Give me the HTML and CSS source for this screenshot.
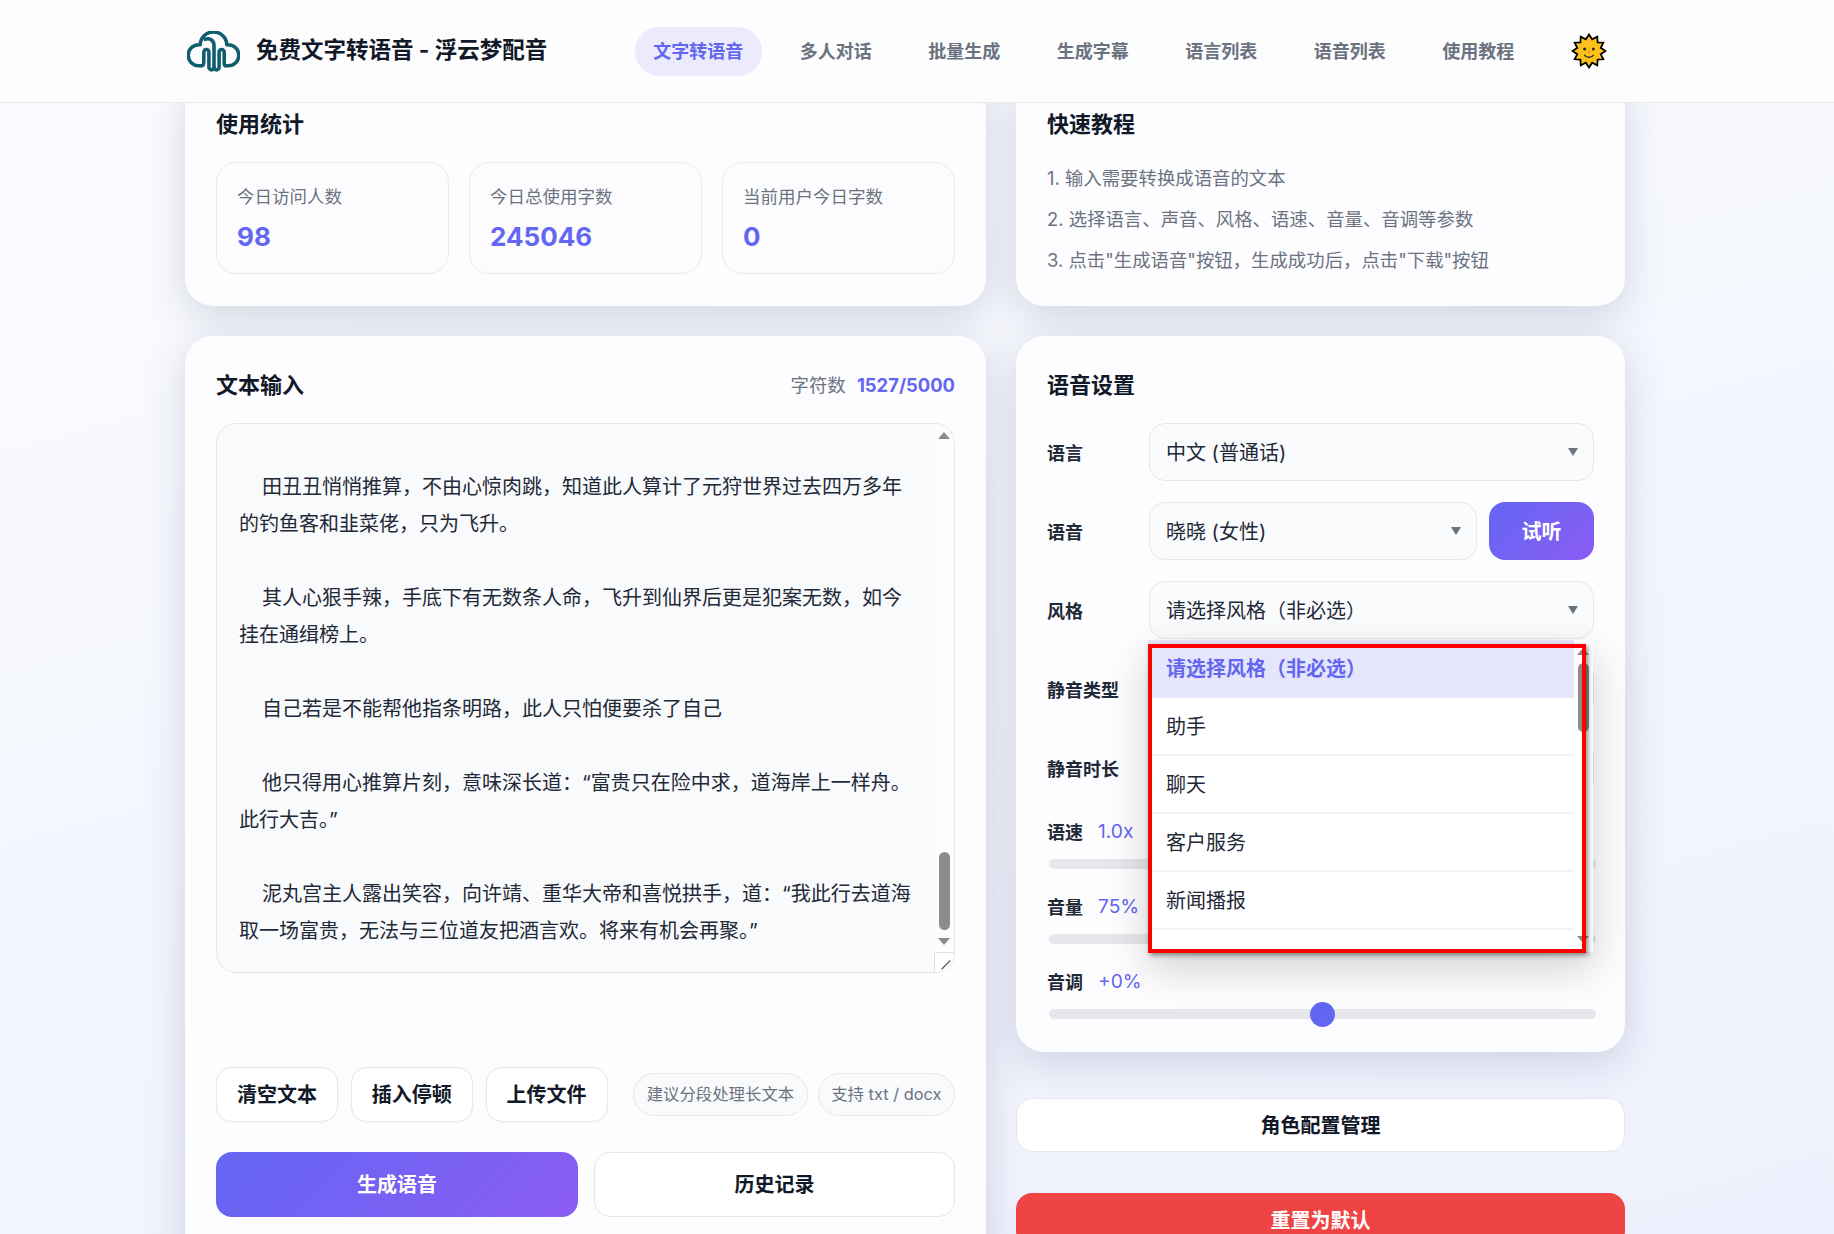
FILE: index.html
```html
<!DOCTYPE html>
<html lang="zh-CN">
<head>
  <meta charset="UTF-8">
  <meta name="viewport" content="width=device-width, initial-scale=1.0">
  <link rel="stylesheet" href="styles.css">
  <title>免费文字转语音 - 浮云梦配音</title>
</head>
<body>
  <header class="topbar">
    <div class="brand">
      <svg class="logo" viewBox="0 0 52 40" fill="none" stroke="#0f5d6e" stroke-width="3.500" stroke-linecap="round" stroke-linejoin="round">
        <path d="M14 34H11.500A10.300 10.300 0 0 1 11.500 13.400H13A13 12.600 0 0 1 39 13.400H40.500A10.300 10.300 0 0 1 40.500 34H38"/>
        <path d="M14 34C16 34 16.500 32.500 16.500 30V20.500A2.500 2.500 0 0 1 21.500 20.500V35.500A2.500 2.500 0 0 0 26.500 35.500V14C26.500 9 22 6.500 18 8"/>
        <path d="M26.500 35.500A2.500 2.500 0 0 0 31.500 35.500V20.500A2.500 2.500 0 0 1 36.500 20.500V31C36.500 33 37 34 38 34"/>
      </svg>
      <span class="brand-name">免费文字转语音 - 浮云梦配音</span>
    </div>
    <nav class="nav">
      <a class="nav-link active">文字转语音</a>
      <a class="nav-link">多人对话</a>
      <a class="nav-link">批量生成</a>
      <a class="nav-link">生成字幕</a>
      <a class="nav-link">语言列表</a>
      <a class="nav-link">语音列表</a>
      <a class="nav-link">使用教程</a>
    </nav>
    <svg class="theme-icon" viewBox="-1.500 -1.500 37 37">
      <polygon fill="#fcc21b" stroke="#000" stroke-width="1.800" stroke-linejoin="miter" points="17,0 20.240,4.930 25.500,2.280 25.840,8.160 31.720,8.500 29.070,13.760 34,17 29.070,20.240 31.720,25.500 25.840,25.840 25.500,31.720 20.240,29.070 17,34 13.760,29.070 8.500,31.720 8.160,25.840 2.280,25.500 4.930,20.240 0,17 4.930,13.760 2.280,8.500 8.160,8.160 8.500,2.280 13.760,4.930"/>
      <circle cx="12.500" cy="15" r="1.600" fill="#2f2f2f"/>
      <circle cx="21.500" cy="15" r="1.600" fill="#2f2f2f"/>
      <circle cx="17" cy="18" r="1.200" fill="#f79329"/>
      <path d="M12.500 21.500C14.500 24 19.500 24 21.500 21.500" fill="none" stroke="#2f2f2f" stroke-width="1.500" stroke-linecap="round"/>
    </svg>
  </header>

  <main class="page">
    <section class="card">
      <h2 class="card-title">使用统计</h2>
      <div class="stats">
        <div class="stat">
          <div class="stat-label">今日访问人数</div>
          <div class="stat-value">98</div>
        </div>
        <div class="stat">
          <div class="stat-label">今日总使用字数</div>
          <div class="stat-value">245046</div>
        </div>
        <div class="stat">
          <div class="stat-label">当前用户今日字数</div>
          <div class="stat-value">0</div>
        </div>
      </div>
    </section>

    <section class="card">
      <h2 class="card-title">快速教程</h2>
      <ol class="steps">
        <li>1. 输入需要转换成语音的文本</li>
        <li>2. 选择语言、声音、风格、语速、音量、音调等参数</li>
        <li>3. 点击"生成语音"按钮，生成成功后，点击"下载"按钮</li>
      </ol>
    </section>

    <section class="card editor">
      <div class="card-head">
        <h2 class="card-title">文本输入</h2>
        <div class="counter">字符数 <strong>1527/5000</strong></div>
      </div>

      <div class="textbox">
        <div class="textbox-text">
          <p class="para">田丑丑悄悄推算，不由心惊肉跳，知道此人算计了元狩世界过去四万多年的钓鱼客和韭菜佬，只为飞升。</p>
          <p class="para">其人心狠手辣，手底下有无数条人命，飞升到仙界后更是犯案无数，如今挂在通缉榜上。</p>
          <p class="para">自己若是不能帮他指条明路，此人只怕便要杀了自己</p>
          <p class="para">他只得用心推算片刻，意味深长道：“富贵只在险中求，道海岸上一样舟。此行大吉。”</p>
          <p class="para">泥丸宫主人露出笑容，向许靖、重华大帝和喜悦拱手，道：“我此行去道海取一场富贵，无法与三位道友把酒言欢。将来有机会再聚。”</p>
        </div>
        <div class="textbox-bar">
          <span class="arrow-up"></span>
          <span class="textbox-thumb"></span>
          <span class="arrow-down"></span>
        </div>
        <svg class="grip" viewBox="0 0 20 20" fill="none" stroke="#666" stroke-width="1.500">
          <path d="M7 17L16 8M13 17L16 14"/>
        </svg>
      </div>

      <div class="tools">
        <button class="btn">清空文本</button>
        <button class="btn">插入停顿</button>
        <button class="btn">上传文件</button>
        <div class="chips">
          <span class="chip">建议分段处理长文本</span>
          <span class="chip">支持 txt / docx</span>
        </div>
      </div>

      <div class="actions">
        <button class="btn-main">生成语音</button>
        <button class="btn-plain">历史记录</button>
      </div>
    </section>

    <div class="side">
      <section class="card settings">
        <h2 class="card-title">语音设置</h2>

        <div class="form-row">
          <label class="form-label">语言</label>
          <div class="select">中文 (普通话)</div>
        </div>
        <div class="form-row">
          <label class="form-label">语音</label>
          <div class="select">晓晓 (女性)</div>
          <button class="btn-try">试听</button>
        </div>
        <div class="form-row">
          <label class="form-label">风格</label>
          <div class="select">请选择风格（非必选）</div>
        </div>
        <div class="form-row">
          <label class="form-label">静音类型</label>
          <div class="select"></div>
        </div>
        <div class="form-row">
          <label class="form-label">静音时长</label>
          <div class="select"></div>
        </div>

        <div class="slider">
          <div class="slider-head"><label class="form-label">语速</label><span class="slider-value">1.0x</span></div>
          <div class="track"><span class="thumb" style="left: 50%"></span></div>
        </div>
        <div class="slider">
          <div class="slider-head"><label class="form-label">音量</label><span class="slider-value">75%</span></div>
          <div class="track"><span class="thumb" style="left: 75%"></span></div>
        </div>
        <div class="slider">
          <div class="slider-head"><label class="form-label">音调</label><span class="slider-value">+0%</span></div>
          <div class="track"><span class="thumb" style="left: 50%"></span></div>
        </div>

        <!-- open style dropdown -->
        <div class="dropdown">
          <ul class="dropdown-list">
            <li class="dropdown-item selected">请选择风格（非必选）</li>
            <li class="dropdown-item">助手</li>
            <li class="dropdown-item">聊天</li>
            <li class="dropdown-item">客户服务</li>
            <li class="dropdown-item">新闻播报</li>
          </ul>
          <div class="dropdown-bar">
            <span class="arrow-up"></span>
            <span class="dropdown-thumb"></span>
            <span class="arrow-down"></span>
          </div>
          <div class="dropdown-frame"></div>
        </div>
      </section>

      <button class="btn-plain btn-role">角色配置管理</button>
      <button class="btn-reset">重置为默认</button>
    </div>
  </main>
</body>
</html>
```

FILE: styles.css
```css
* {
  box-sizing: border-box;
}

body {
  margin: 0;
  height: 1234px;
  overflow: hidden;
  font-family: Inter, "Noto Sans CJK SC", sans-serif;
  color: #111827;
  background: linear-gradient(165deg, #fbfcff, #eef1fd);
}

button {
  padding: 0 0 2px;
  font-family: inherit;
  cursor: pointer;
}

/* header */
.topbar {
  position: relative;
  z-index: 5;
  height: 103px;
  display: flex;
  align-items: center;
  padding-left: 187px;
  background: #fdfdfe;
  border-bottom: 1px solid #e8eaef;
}

.brand {
  display: flex;
  align-items: center;
  gap: 16px;
  width: 448px;
}

.logo {
  width: 53px;
  height: 41px;
}

.brand-name {
  position: relative;
  top: -3px;
  font-size: 22.500px;
  font-weight: 700;
}

.nav {
  display: flex;
  gap: 20px;
}

.nav-link {
  padding: 0 18.250px;
  height: 49px;
  line-height: 49px;
  border-radius: 25px;
  font-size: 18px;
  font-weight: 600;
  color: #6b7280;
}

.nav-link.active {
  color: #6366f1;
  background: #ebebfd;
}

.theme-icon {
  width: 36px;
  height: 36px;
  margin-left: 38px;
}

/* page grid */
.page {
  margin-top: -28px;
  padding-left: 185px;
  display: grid;
  grid-template-columns: 801px 609px;
  column-gap: 30px;
  row-gap: 30px;
  align-items: start;
}

.card {
  position: relative;
  padding: 31px;
  border-radius: 28px;
  background: #fdfdff;
  box-shadow: 0 10px 40px rgba(30, 40, 80, 0.17);
}

.page > .card:nth-child(-n+2) {
  height: 231px;
}

.card-title {
  margin: 0 0 20px;
  font-size: 22px;
  line-height: 36px;
  font-weight: 700;
}

/* stats */
.stats {
  display: grid;
  grid-template-columns: repeat(3, 1fr);
  gap: 20px;
}

.stat {
  height: 112px;
  padding: 22px 20px;
  border: 1px solid #e8eaef;
  border-radius: 20px;
  background: #fcfcfe;
}

.stat-label {
  font-size: 17.500px;
  line-height: 24px;
  color: #6b7280;
}

.stat-value {
  margin-top: 12px;
  font-size: 26px;
  line-height: 32px;
  font-weight: 700;
  color: #6366f1;
}

/* tutorial */
.steps {
  margin: -4px 0 0;
  padding: 0;
  list-style: none;
  font-size: 18.400px;
  line-height: 41px;
  color: #6b7280;
}

/* text input */
.editor {
  height: 950px;
}

.card-head {
  display: flex;
  justify-content: space-between;
}

.counter {
  font-size: 18.400px;
  line-height: 36px;
  color: #6b7280;
}

.counter strong {
  margin-left: 6px;
  font-weight: 700;
  color: #6366f1;
}

.textbox {
  position: relative;
  height: 550px;
  overflow: hidden;
  border: 1px solid #e5e7eb;
  border-radius: 20px;
  background: #f9fafc;
}

.textbox-text {
  padding: 44.500px 36px 0 22px;
  font-size: 20px;
  line-height: 37px;
  color: #1f2937;
}

.para {
  margin: 0 0 37px;
  text-indent: 23px;
}

.textbox-bar {
  position: absolute;
  top: 0;
  right: 0;
  width: 19px;
  height: 100%;
  background: #fdfdfd;
}

.textbox-thumb {
  position: absolute;
  top: 428px;
  left: 4px;
  width: 11px;
  height: 78px;
  border-radius: 6px;
  background: #8c8c8c;
}

.arrow-up,
.arrow-down {
  position: absolute;
  left: 3px;
  width: 0;
  height: 0;
  border-left: 6.500px solid transparent;
  border-right: 6.500px solid transparent;
}

.arrow-up {
  top: 8px;
  border-bottom: 7px solid #8c8c8c;
}

.arrow-down {
  top: 514px;
  border-top: 7px solid #8c8c8c;
}

.grip {
  position: absolute;
  right: 0;
  bottom: 0;
  width: 20px;
  height: 20px;
  background: #fff;
  border-left: 1px solid #dfe1e6;
  border-top: 1px solid #dfe1e6;
}

/* buttons under the text box */
.tools {
  display: flex;
  align-items: center;
  gap: 12.800px;
  margin-top: 94px;
}

.btn {
  flex: none;
  width: 122px;
  height: 55px;
  border: 1px solid #e5e7eb;
  border-radius: 16px;
  background: #fff;
  font-size: 20px;
  font-weight: 700;
  color: #111827;
  box-shadow: 0 1px 3px rgba(0, 0, 0, 0.04);
}

.chips {
  display: flex;
  gap: 10px;
  margin-left: auto;
}

.chip {
  height: 43px;
  padding: 0 12.500px;
  line-height: 41px;
  border: 1px solid #e5e7eb;
  border-radius: 22px;
  background: #f9fafb;
  font-size: 16.400px;
  color: #6b7280;
  white-space: nowrap;
}

.actions {
  display: grid;
  grid-template-columns: 362px 361px;
  gap: 16px;
  margin-top: 30px;
}

.btn-main {
  height: 65px;
  border: 0;
  border-radius: 16px;
  background: linear-gradient(135deg, #6366f1, #8b5cf6);
  font-size: 20px;
  font-weight: 700;
  color: #fff;
}

.btn-plain {
  height: 65px;
  border: 1px solid #e5e7eb;
  border-radius: 16px;
  background: #fff;
  font-size: 20px;
  font-weight: 700;
  color: #111827;
}

/* settings column */
.side {
  display: flex;
  flex-direction: column;
}

.settings {
  height: 716px;
}

.form-row {
  display: flex;
  align-items: center;
  height: 58px;
  margin-bottom: 21px;
}

.form-label {
  flex: none;
  width: 102px;
  font-size: 18px;
  font-weight: 700;
  color: #1f2937;
}

.select {
  position: relative;
  flex: 1;
  height: 58px;
  padding-left: 16px;
  line-height: 58px;
  border: 1px solid #e5e7eb;
  border-radius: 16px;
  background: #fafbfd;
  font-size: 20px;
  color: #1f2937;
}

.select::after {
  content: "";
  position: absolute;
  top: 24px;
  right: 15px;
  border-left: 5px solid transparent;
  border-right: 5px solid transparent;
  border-top: 8px solid #6b7280;
}

.btn-try {
  width: 105px;
  height: 58px;
  margin-left: 12px;
  border: 0;
  border-radius: 16px;
  background: linear-gradient(135deg, #6366f1, #8b5cf6);
  font-size: 20px;
  font-weight: 700;
  color: #fff;
}

.slider-head {
  display: flex;
  align-items: center;
  height: 28px;
}

.slider-head .form-label {
  width: 51px;
}

.slider-value {
  font-size: 19.200px;
  color: #6366f1;
}

.slider {
  margin-bottom: 23px;
}

.form-row + .slider {
  margin-top: -1px;
}

.track {
  position: relative;
  height: 10px;
  margin: 14px -2px 0 2px;
  border-radius: 5px;
  background: #e5e7eb;
}

.thumb {
  position: absolute;
  top: -7px;
  width: 25px;
  height: 25px;
  margin-left: -12.500px;
  border-radius: 50%;
  background: #6366f1;
}

.dropdown {
  position: absolute;
  z-index: 3;
  top: 304px;
  left: 132px;
  width: 445px;
  height: 312px;
  background: #fff;
  box-shadow: 0 16px 40px rgba(0, 0, 0, 0.18);
}

.dropdown-list {
  margin: 0;
  padding: 0;
  list-style: none;
  width: 426px;
  height: 100%;
  overflow: hidden;
}

.dropdown-item {
  height: 58px;
  padding-left: 18px;
  line-height: 58px;
  border-bottom: 2px solid #f1f2f5;
  font-size: 20px;
  color: #1f2937;
}

.dropdown-item.selected {
  background: #e5e6fb;
  font-weight: 700;
  color: #6366f1;
  border-bottom: 0;
}

.dropdown-bar {
  position: absolute;
  top: 0;
  right: 0;
  width: 19px;
  height: 100%;
}

.dropdown-thumb {
  position: absolute;
  top: 23px;
  left: 4px;
  width: 11px;
  height: 69px;
  border-radius: 6px;
  background: #8c8c8c;
}

.dropdown .arrow-down {
  top: 296px;
}

.dropdown-frame {
  position: absolute;
  top: 4px;
  left: 0;
  width: 438px;
  height: 309px;
  border: 4px solid #ff0000;
  box-shadow: 2px 2px 5px rgba(0, 0, 0, 0.45);
}

.btn-role {
  height: 54px;
  margin-top: 46px;
}

.btn-reset {
  height: 54px;
  margin-top: 41px;
  border: 0;
  border-radius: 16px;
  background: #ef4444;
  font-size: 20px;
  font-weight: 700;
  color: #fff;
}
```
